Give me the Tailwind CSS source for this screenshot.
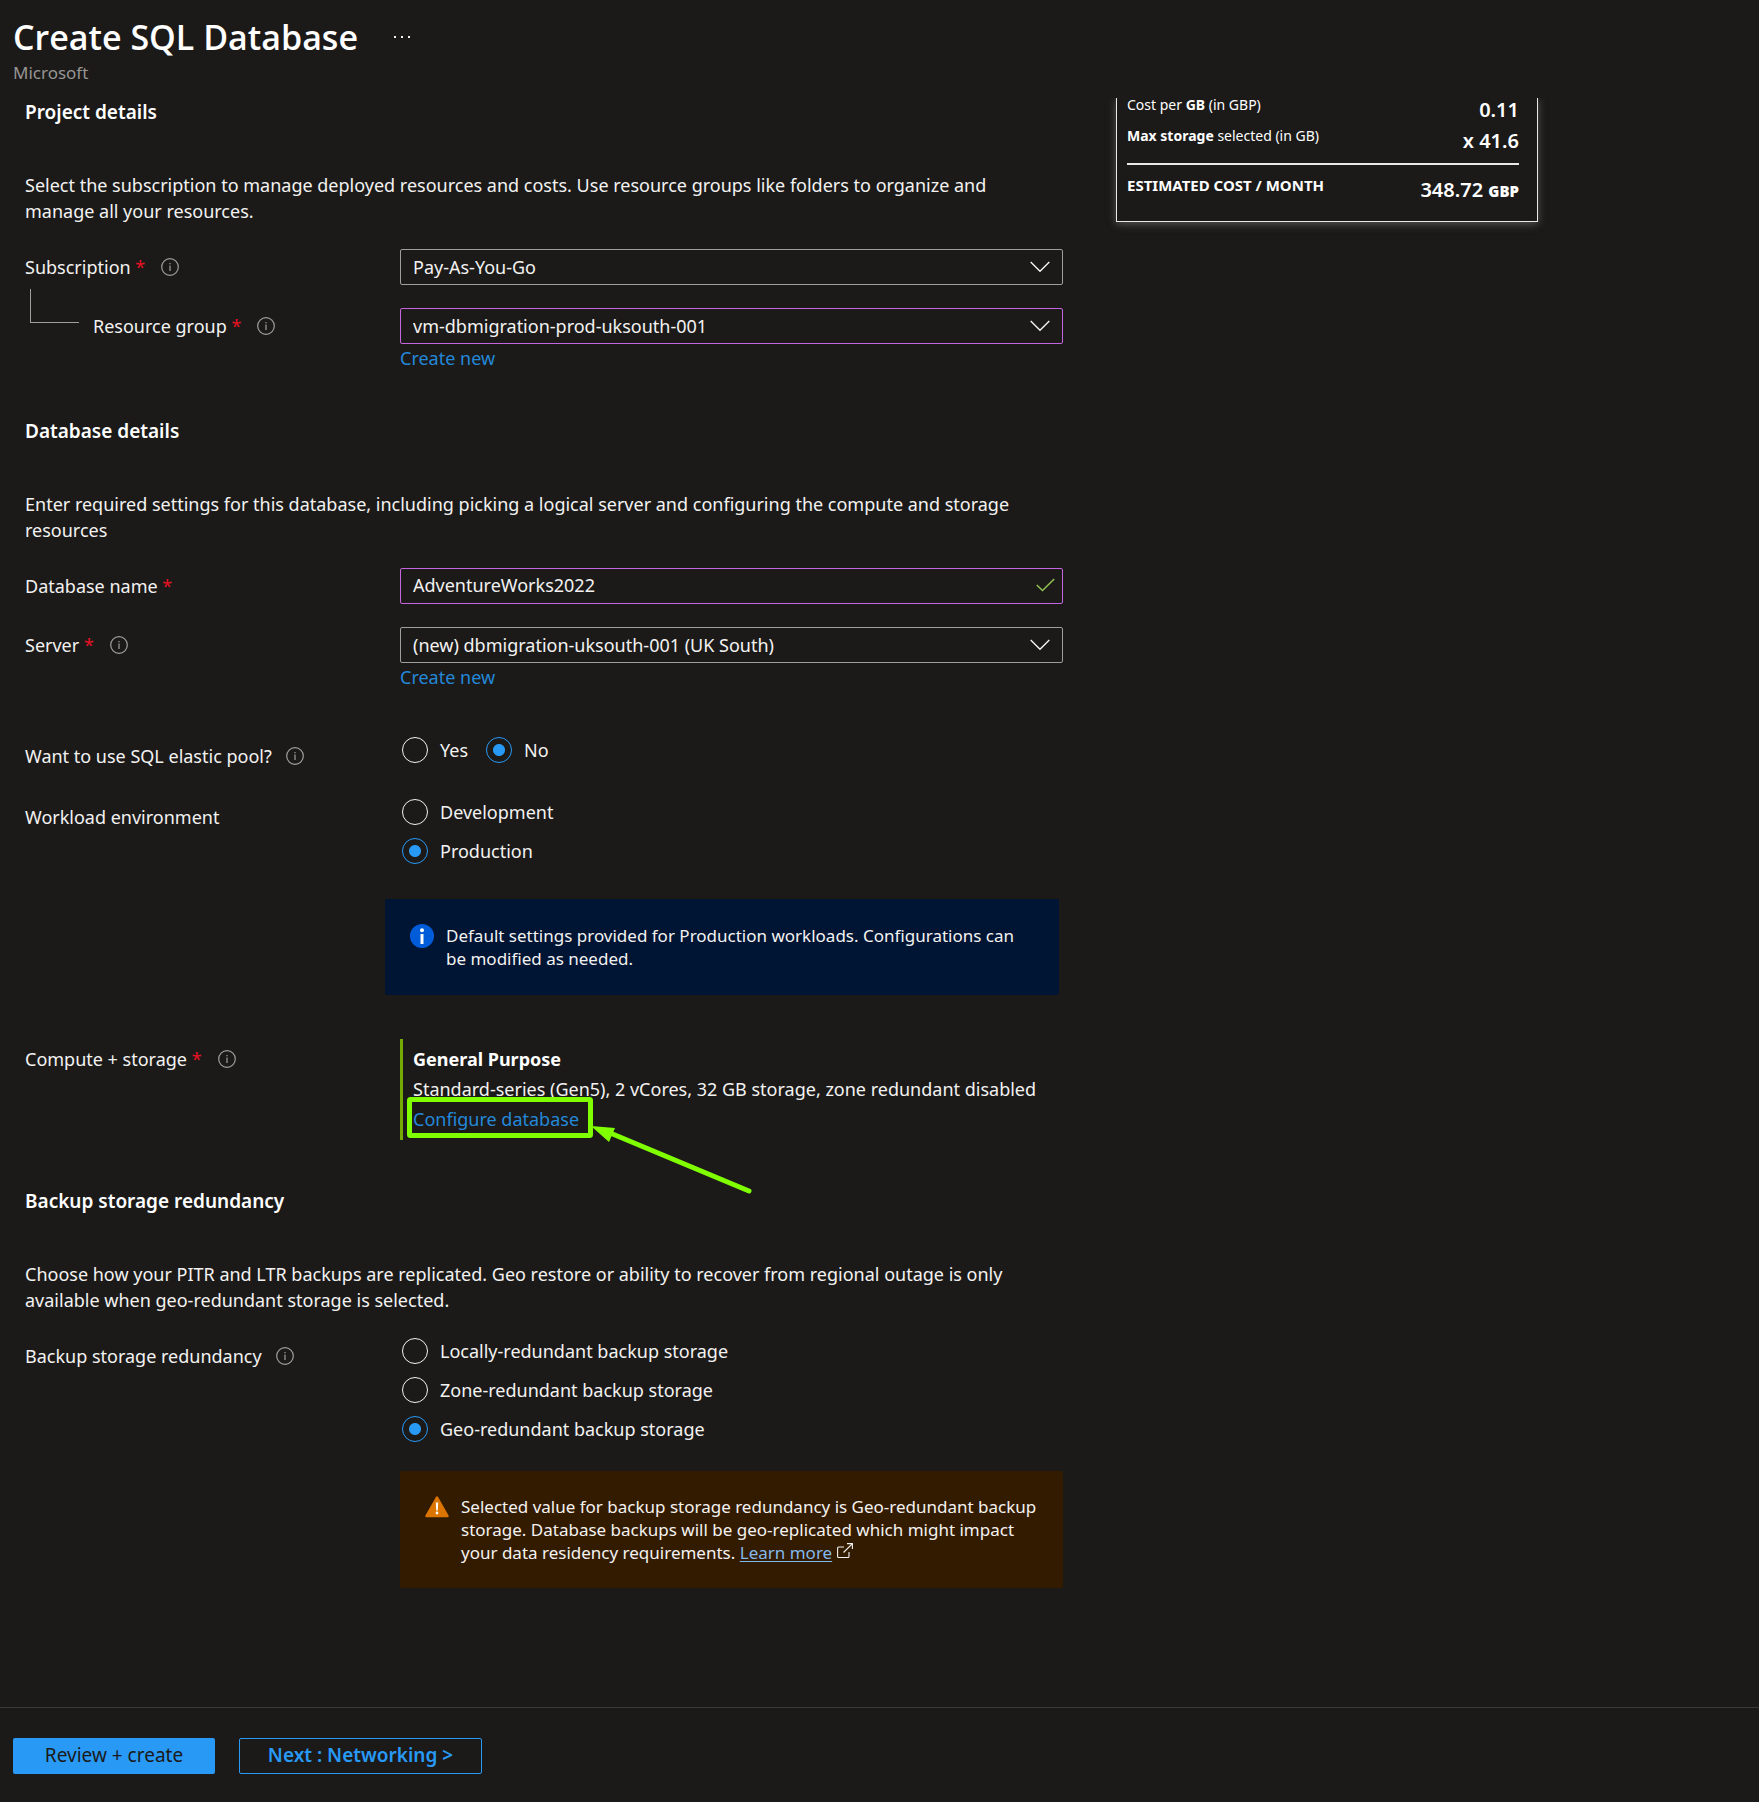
<!DOCTYPE html>
<html lang="en">
<head>
<meta charset="utf-8">
<title>Create SQL Database</title>
<script src="https://cdn.jsdelivr.net/npm/@tailwindcss/browser@4"></script>
</head>
<body class="flex min-h-screen flex-col bg-[#1b1a19] font-['Noto_Sans','Open_Sans',sans-serif] text-[18px] leading-[26px] text-[#f3f2f1]">
<svg class="hidden" aria-hidden="true">
  <symbol id="info" viewBox="0 0 18 18"><circle cx="9" cy="9" r="8.3" fill="none" stroke="#a19f9d" stroke-width="1.2"/><path d="M9 7.5v5.5M9 5v1.3" stroke="#a19f9d" stroke-width="1.2"/></symbol>
  <symbol id="chevron" viewBox="0 0 20 12"><path d="M.7 1 10 10.300l9.300-9.300" fill="none" stroke="#f3f2f1" stroke-width="1.400"/></symbol>
</svg>

<header class="h-[98px] px-[13px] pt-[15px]">
  <div class="flex items-center gap-9">
    <h1 class="font-['Open_Sans','Noto_Sans',sans-serif] text-[34px] leading-[44px] font-semibold text-white">Create SQL Database</h1>
    <button type="button" aria-label="More actions"><svg class="h-1 w-4" viewBox="0 0 16 4" fill="#f3f2f1"><path d="M0 1h2v2H0zM7 1h2v2H7zM14 1h2v2h-2z"/></svg></button>
  </div>
  <p class="text-[17px] leading-7 text-[#979593]">Microsoft</p>
</header>

<main class="flex grow items-start">
  <form id="sql" class="w-full max-w-[1063px] pl-[25px]">
    <h2 class="text-[19px] leading-7 font-semibold text-white">Project details</h2>
    <p class="mt-[46px]">Select the subscription to manage deployed resources and costs. Use resource groups like folders to organize and<br>manage all your resources.</p>

    <div class="mt-[25px] grid grid-cols-[375px_minmax(0,1fr)]">
      <div class="flex h-9 items-center"><label for="sub">Subscription <span class="text-[#e81123]">*</span></label><svg class="ml-4 size-[18px]"><use href="#info"/></svg></div>
      <div class="relative">
        <select id="sub" class="block h-9 w-full appearance-none rounded-xs border border-[#a19f9d] bg-transparent px-3"><option>Pay-As-You-Go</option></select>
        <svg class="pointer-events-none absolute top-3 right-[13px] h-3 w-5"><use href="#chevron"/></svg>
      </div>
    </div>

    <div class="mt-[23px] grid grid-cols-[375px_minmax(0,1fr)]">
      <div class="flex h-9 items-center"><span class="mr-3.5 ml-[5px] h-[34px] w-[49px] -translate-y-5 border-b border-l border-[#a19f9d]"></span><label for="rg">Resource group <span class="text-[#e81123]">*</span></label><svg class="ml-4 size-[18px]"><use href="#info"/></svg></div>
      <div class="relative">
        <select id="rg" class="block h-9 w-full appearance-none rounded-xs border border-[#c565e0] bg-transparent px-3"><option>vm-dbmigration-prod-uksouth-001</option></select>
        <svg class="pointer-events-none absolute top-3 right-[13px] h-3 w-5"><use href="#chevron"/></svg>
        <a href="#" class="block w-fit leading-7 text-[#2488d8]">Create new</a>
      </div>
    </div>

    <h2 class="mt-[45px] text-[19px] leading-7 font-semibold text-white">Database details</h2>
    <p class="mt-[46px]">Enter required settings for this database, including picking a logical server and configuring the compute and storage<br>resources</p>

    <div class="mt-[25px] grid grid-cols-[375px_minmax(0,1fr)]">
      <div class="flex h-9 items-center"><label for="db">Database name <span class="text-[#e81123]">*</span></label></div>
      <div class="relative">
        <input id="db" type="text" value="AdventureWorks2022" class="block h-9 w-full rounded-xs border border-[#c565e0] bg-transparent px-3 pb-0.5">
        <svg class="pointer-events-none absolute top-2.5 right-2 h-3.5 w-[19px]" viewBox="0 0 19 14"><path d="M.8 7 6.500 12.500 18.200 1" fill="none" stroke="#92c353" stroke-width="1.500"/></svg>
      </div>
    </div>

    <div class="mt-[23px] grid grid-cols-[375px_minmax(0,1fr)]">
      <div class="flex h-9 items-center"><label for="srv">Server <span class="text-[#e81123]">*</span></label><svg class="ml-4 size-[18px]"><use href="#info"/></svg></div>
      <div class="relative">
        <select id="srv" class="block h-9 w-full appearance-none rounded-xs border border-[#a19f9d] bg-transparent px-3"><option>(new) dbmigration-uksouth-001 (UK South)</option></select>
        <svg class="pointer-events-none absolute top-3 right-[13px] h-3 w-5"><use href="#chevron"/></svg>
        <a href="#" class="block w-fit leading-7 text-[#2488d8]">Create new</a>
      </div>
    </div>

    <div role="radiogroup" aria-labelledby="pool" class="mt-[46px] grid grid-cols-[375px_minmax(0,1fr)]">
      <div class="flex items-center pt-1.5"><span id="pool">Want to use SQL elastic pool?</span><svg class="ml-3.5 size-[18px]"><use href="#info"/></svg></div>
      <div class="flex items-start gap-[18px] pl-0.5">
        <label class="flex items-center gap-3"><input type="radio" name="pool" class="size-[26px] appearance-none rounded-full border border-[#f3f2f1] checked:border-[#2899f5] checked:bg-[radial-gradient(circle,#2899f5_5.500px,transparent_6.500px)]">Yes</label>
        <label class="flex items-center gap-3"><input type="radio" name="pool" checked class="size-[26px] appearance-none rounded-full border border-[#f3f2f1] checked:border-[#2899f5] checked:bg-[radial-gradient(circle,#2899f5_5.500px,transparent_6.500px)]">No</label>
      </div>
    </div>

    <div role="radiogroup" aria-labelledby="env" class="mt-[30px] grid grid-cols-[375px_minmax(0,1fr)]">
      <div class="pt-[5px]"><span id="env">Workload environment</span></div>
      <div class="flex flex-col gap-[13px] pl-0.5">
        <label class="flex items-center gap-3"><input type="radio" name="env" class="size-[26px] appearance-none rounded-full border border-[#f3f2f1] checked:border-[#2899f5] checked:bg-[radial-gradient(circle,#2899f5_5.500px,transparent_6.500px)]">Development</label>
        <label class="flex items-center gap-3"><input type="radio" name="env" checked class="size-[26px] appearance-none rounded-full border border-[#f3f2f1] checked:border-[#2899f5] checked:bg-[radial-gradient(circle,#2899f5_5.500px,transparent_6.500px)]">Production</label>
      </div>
    </div>

    <div class="mt-[35px] mr-1 ml-[360px] flex gap-3 rounded-xs bg-[#001433] py-[25px] pr-6 pl-[25px] text-[17px] leading-[23px]">
      <svg class="size-6 shrink-0" viewBox="0 0 24 24"><circle cx="12" cy="12" r="12" fill="#015cda"/><path d="M10.500 10h3v10h-3z" fill="#fff"/><circle cx="12" cy="6.200" r="2" fill="#fff"/></svg>
      <p>Default settings provided for Production workloads. Configurations can<br>be modified as needed.</p>
    </div>

    <div class="mt-11 grid grid-cols-[375px_minmax(0,1fr)]">
      <div class="flex h-10 items-center"><span>Compute + storage <span class="text-[#e81123]">*</span></span><svg class="ml-4 size-[18px]"><use href="#info"/></svg></div>
      <div class="relative border-l-[3px] border-[#7fba00]/90 pt-[5px] pb-1.5 pl-2.5 leading-[30px] whitespace-nowrap">
        <p class="font-bold text-white">General Purpose</p>
        <p>Standard-series (Gen5), 2 vCores, 32 GB storage, zone redundant disabled</p>
        <a href="#" class="block w-fit text-[#2488d8]">Configure database</a>
        <svg class="pointer-events-none absolute top-[58px] left-1 h-[100px] w-[346px]" viewBox="0 0 346 100"><rect x="2.500" y="2.500" width="181" height="36" rx="1" fill="none" stroke="#80ff00" stroke-width="5"/><path d="m196 33 146 61" stroke="#80ff00" stroke-width="5" stroke-linecap="round"/><path d="m184 29 24 2-6 14z" fill="#80ff00"/></svg>
      </div>
    </div>

    <h2 class="mt-[47px] text-[19px] leading-7 font-semibold text-white">Backup storage redundancy</h2>
    <p class="mt-[46px]">Choose how your PITR and LTR backups are replicated. Geo restore or ability to recover from regional outage is only<br>available when geo-redundant storage is selected.</p>

    <div role="radiogroup" aria-labelledby="red" class="mt-[25px] grid grid-cols-[375px_minmax(0,1fr)]">
      <div class="flex items-center self-start pt-[5px]"><span id="red">Backup storage redundancy</span><svg class="ml-3.5 size-[18px]"><use href="#info"/></svg></div>
      <div class="flex flex-col gap-[13px] pl-0.5">
        <label class="flex items-center gap-3"><input type="radio" name="red" class="size-[26px] appearance-none rounded-full border border-[#f3f2f1] checked:border-[#2899f5] checked:bg-[radial-gradient(circle,#2899f5_5.500px,transparent_6.500px)]">Locally-redundant backup storage</label>
        <label class="flex items-center gap-3"><input type="radio" name="red" class="size-[26px] appearance-none rounded-full border border-[#f3f2f1] checked:border-[#2899f5] checked:bg-[radial-gradient(circle,#2899f5_5.500px,transparent_6.500px)]">Zone-redundant backup storage</label>
        <label class="flex items-center gap-3"><input type="radio" name="red" checked class="size-[26px] appearance-none rounded-full border border-[#f3f2f1] checked:border-[#2899f5] checked:bg-[radial-gradient(circle,#2899f5_5.500px,transparent_6.500px)]">Geo-redundant backup storage</label>
      </div>
    </div>

    <div class="mt-[29px] ml-[375px] flex gap-3 rounded-xs bg-[#331b00] py-6 pr-5 pl-[25px] text-[17px] leading-[23px]">
      <svg class="size-6 shrink-0" viewBox="0 0 24 24"><path d="M12 2.500 22.500 21h-21z" fill="#db7500" stroke="#db7500" stroke-width="2.500" stroke-linejoin="round"/><path d="M10.800 7.500h2.400l-.4 8h-1.600z" fill="#fff"/><circle cx="12" cy="18" r="1.400" fill="#fff"/></svg>
      <p>Selected value for backup storage redundancy is Geo-redundant backup<br>storage. Database backups will be geo-replicated which might impact<br>your data residency requirements. <a href="#" class="text-[#82b8ec] underline underline-offset-2">Learn more</a> <svg class="inline size-4 align-baseline" viewBox="0 0 16 16" fill="none" stroke="#f3f2f1" stroke-width="1.100"><path d="M7 4H1.600Q.6 4 .6 5v8.500q0 1 1 1H11q1 0 1-1V9M10 .6h5.400V6M15.200.8 6.500 9.500"/></svg></p>
    </div>
  </form>

  <aside class="relative ml-[53px] w-[422px] shrink-0 text-[14px] leading-5 text-white">
    <!-- Frame is clipped at the scroll edge so its glow does not spill onto the header -->
    <div class="absolute inset-x-[-12px] top-0 -bottom-4 overflow-hidden px-3 pb-4"><div class="h-full border border-t-0 border-[#e8e8e8] shadow-[0_2px_8px_#555555]"></div></div>
    <dl class="relative h-[124px] pr-[19px] pl-[11px]">
      <div class="flex justify-between"><dt class="leading-[14px]">Cost per <b>GB</b> (in GBP)</dt><dd class="text-[20px] leading-6 font-semibold">0.11</dd></div>
      <div class="mt-[7px] flex justify-between border-b-2 border-[#e8e8e8] pb-2.5"><dt class="leading-[14px]"><b>Max storage</b> selected (in GB)</dt><dd class="text-[20px] leading-6 font-semibold">x 41.6</dd></div>
      <div class="mt-[13px] flex justify-between"><dt class="text-[15px] leading-[14px] font-bold">ESTIMATED COST / MONTH</dt><dd class="text-[20px] leading-6 font-semibold">348.72 <b class="text-[15px]">GBP</b></dd></div>
    </dl>
  </aside>
</main>

<footer class="flex h-[95px] shrink-0 gap-6 border-t border-[#3b3a39] px-[13px] pt-[30px]">
  <button form="sql" type="submit" class="h-9 w-[202px] rounded-xs bg-[#2899f5] pb-0.5 text-[19px] text-[#1b1a19]">Review + create</button>
  <button type="button" class="h-9 w-[243px] rounded-xs border border-[#2899f5] pb-0.5 text-[19px] font-semibold text-[#2899f5]">Next : Networking &gt;</button>
</footer>
</body>
</html>
